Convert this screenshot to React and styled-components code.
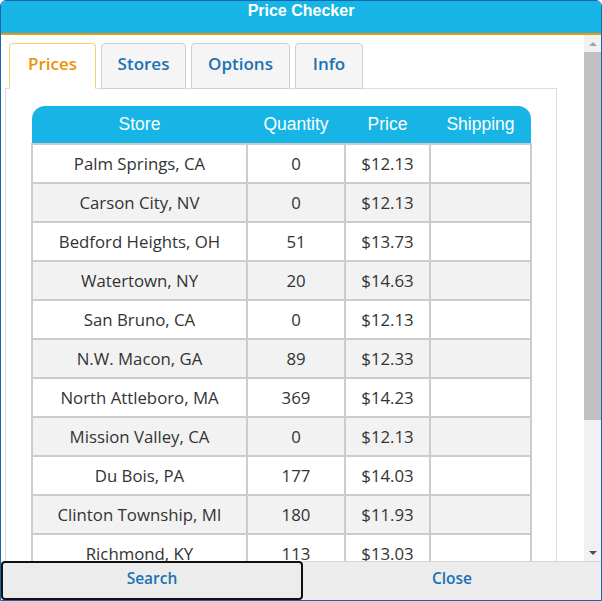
import React, { useState } from "react";
import styled, { createGlobalStyle } from "styled-components";

const GlobalStyle = createGlobalStyle`
  html, body {
    margin: 0;
    padding: 0;
    background: #ffffff;
  }
  * {
    box-sizing: border-box;
  }
`;

const Window = styled.div`
  width: 602px;
  height: 601px;
  border: 1px solid #1766ad;
  border-radius: 6px 6px 0 0;
  display: flex;
  flex-direction: column;
  overflow: hidden;
  background: #ffffff;
`;

const TitleBar = styled.div`
  height: 34px;
  flex: 0 0 34px;
  background: #16b5e5;
  border-bottom: 2px solid #f0950c;
  color: #ffffff;
  font-family: "Liberation Sans", Arial, sans-serif;
  font-weight: bold;
  font-size: 16px;
  line-height: 18px;
  text-align: center;
  padding-top: 1px;
`;

const Body = styled.div`
  flex: 1 1 auto;
  display: flex;
  min-height: 0;
`;

const Viewport = styled.div`
  flex: 1 1 auto;
  overflow: hidden;
  padding: 8px 0 12px 4px;
`;

const ScrollBar = styled.div`
  flex: 0 0 17px;
  display: flex;
  flex-direction: column;
  background: #f1f1f1;
`;

const Arrow = styled.div`
  height: 17px;
  flex: 0 0 17px;
  display: flex;
  align-items: center;
  justify-content: center;
  &::after {
    content: "";
    width: 0;
    height: 0;
    border-left: 4px solid transparent;
    border-right: 4px solid transparent;
    ${(p) =>
      p.$down
        ? "border-top: 4px solid #505050;"
        : "border-bottom: 4px solid #a3a3a3;"}
  }
`;

const Thumb = styled.div`
  flex: 0 0 368px;
  background: #c1c1c1;
`;

const Track = styled.div`
  flex: 1 1 auto;
`;

const TabRow = styled.div`
  display: flex;
  gap: 5px;
  padding-left: 4px;
  position: relative;
  z-index: 1;
`;

const Tab = styled.button`
  width: ${(p) => p.$width}px;
  height: 46px;
  padding: 0 0 5px;
  margin-bottom: -1px;
  border: 1px solid ${(p) => (p.$active ? "#f4d27a" : "#cfcfcf")};
  border-bottom: ${(p) => (p.$active ? "1px solid #ffffff" : "1px solid #cfcfcf")};
  border-radius: 4px 4px 0 0;
  background: ${(p) => (p.$active ? "#ffffff" : "#f5f5f5")};
  color: ${(p) => (p.$active ? "#f0900a" : "#1a72b4")};
  font-family: "Open Sans", "Noto Sans", sans-serif;
  font-weight: 600;
  font-size: 17px;
  cursor: pointer;
`;

const Panel = styled.div`
  width: 552px;
  border: 1px solid #dcdcdc;
  padding: 17px 25px 20px;
  background: #ffffff;
`;

const Table = styled.table`
  width: 499px;
  border-collapse: collapse;
  table-layout: fixed;
`;

const HeadCell = styled.th`
  background: #16b5e5;
  color: #ffffff;
  font-family: "Liberation Sans", Arial, sans-serif;
  font-weight: normal;
  font-size: 17.5px;
  height: 38px;
  padding: 0 0 1px;
  text-align: center;
  &:first-child {
    border-top-left-radius: 13px;
  }
  &:last-child {
    border-top-right-radius: 13px;
  }
`;

const Row = styled.tr`
  background: ${(p) => (p.$odd ? "#f2f2f2" : "#ffffff")};
`;

const Cell = styled.td`
  border: 2px solid #cccccc;
  height: 39px;
  padding: 0;
  text-align: center;
  color: #333333;
  font-family: "Open Sans", "Noto Sans", sans-serif;
  font-size: 16.8px;
`;

const ButtonBar = styled.div`
  flex: 0 0 39px;
  display: flex;
`;

const BarButton = styled.button`
  flex: 1 1 0;
  background: #ececec;
  border: ${(p) => (p.$focused ? "2px solid #111111" : "none")};
  border-top: ${(p) => (p.$focused ? "2px solid #111111" : "1px solid #d5d5d5")};
  border-radius: ${(p) => (p.$focused ? "4px" : "0")};
  color: #1a72b4;
  font-family: "Open Sans", "Noto Sans", sans-serif;
  font-weight: 600;
  font-size: 15.5px;
  padding: 0 0 6px;
  cursor: pointer;
`;

const stores = [
  ["Palm Springs, CA", "0", "$12.13"],
  ["Carson City, NV", "0", "$12.13"],
  ["Bedford Heights, OH", "51", "$13.73"],
  ["Watertown, NY", "20", "$14.63"],
  ["San Bruno, CA", "0", "$12.13"],
  ["N.W. Macon, GA", "89", "$12.33"],
  ["North Attleboro, MA", "369", "$14.23"],
  ["Mission Valley, CA", "0", "$12.13"],
  ["Du Bois, PA", "177", "$14.03"],
  ["Clinton Township, MI", "180", "$11.93"],
  ["Richmond, KY", "113", "$13.03"],
  ["Fort Wayne, IN", "42", "$12.83"],
  ["Tucson, AZ", "0", "$12.13"],
  ["Salem, OR", "64", "$13.43"],
];

const tabs = [
  { label: "Prices", width: 87 },
  { label: "Stores", width: 85 },
  { label: "Options", width: 99 },
  { label: "Info", width: 68 },
];

export default function App() {
  const [tab, setTab] = useState("Prices");

  return (
    <>
      <GlobalStyle />
      <Window>
        <TitleBar>Price Checker</TitleBar>
        <Body>
          <Viewport>
            <TabRow>
              {tabs.map((t) => (
                <Tab
                  key={t.label}
                  $width={t.width}
                  $active={t.label === tab}
                  onClick={() => setTab(t.label)}
                >
                  {t.label}
                </Tab>
              ))}
            </TabRow>
            <Panel>
              <Table>
                <colgroup>
                  <col style={{ width: 215 }} />
                  <col style={{ width: 98 }} />
                  <col style={{ width: 85 }} />
                  <col style={{ width: 101 }} />
                </colgroup>
                <thead>
                  <tr>
                    <HeadCell>Store</HeadCell>
                    <HeadCell>Quantity</HeadCell>
                    <HeadCell>Price</HeadCell>
                    <HeadCell>Shipping</HeadCell>
                  </tr>
                </thead>
                <tbody>
                  {stores.map(([name, qty, price], i) => (
                    <Row key={name} $odd={i % 2 === 1}>
                      <Cell>{name}</Cell>
                      <Cell>{qty}</Cell>
                      <Cell>{price}</Cell>
                      <Cell></Cell>
                    </Row>
                  ))}
                </tbody>
              </Table>
            </Panel>
          </Viewport>
          <ScrollBar>
            <Arrow />
            <Thumb />
            <Track />
            <Arrow $down />
          </ScrollBar>
        </Body>
        <ButtonBar>
          <BarButton $focused>Search</BarButton>
          <BarButton>Close</BarButton>
        </ButtonBar>
      </Window>
    </>
  );
}
